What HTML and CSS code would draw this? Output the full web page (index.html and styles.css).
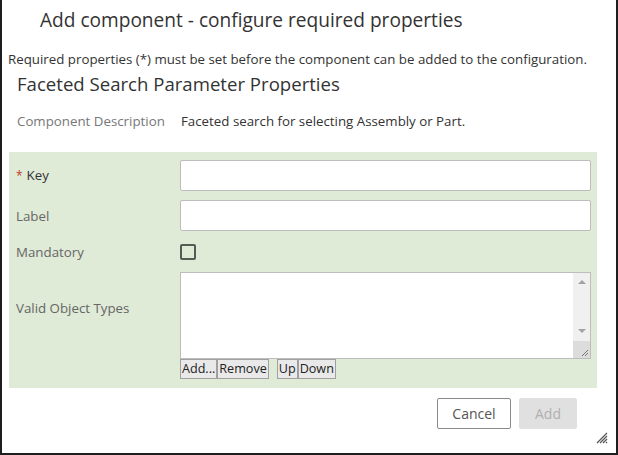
FILE: index.html
```html
<!DOCTYPE html>
<html>
<head>
<meta charset="utf-8">
<link rel="stylesheet" href="styles.css">
</head>
<body>
<div class="dialog">
  <div class="title">Add component - configure required properties</div>
  <p class="intro">Required properties (*) must be set before the component can be added to the configuration.</p>
  <div class="section-title">Faceted Search Parameter Properties</div>
  <div class="desc">
    <span class="desc-label">Component Description</span>
    <span class="desc-value">Faceted search for selecting Assembly or Part.</span>
  </div>
  <div class="panel">
    <div class="row row-key">
      <label class="lbl lbl-req"><span class="req">*</span>Key</label>
      <input class="field" type="text">
    </div>
    <div class="row row-label">
      <label class="lbl">Label</label>
      <input class="field" type="text">
    </div>
    <div class="row row-mand">
      <label class="lbl">Mandatory</label>
      <span class="check"></span>
    </div>
    <div class="row row-types">
      <label class="lbl lbl-types">Valid Object Types</label>
      <div class="types">
        <div class="listbox">
          <div class="list-area"></div>
          <div class="scrollbar">
            <div class="sb-track">
              <span class="arrow up"></span>
              <span class="arrow down"></span>
            </div>
            <div class="sb-corner">
              <svg width="17" height="17" viewBox="0 0 17 17"><path d="M15 9 L9 15 M15 12 L12 15" stroke="#777" stroke-width="1" fill="none"/></svg>
            </div>
          </div>
        </div>
        <div class="list-buttons">
          <button class="mini">Add...</button><button class="mini">Remove</button>
          <span class="spacer"></span>
          <button class="mini">Up</button><button class="mini">Down</button>
        </div>
      </div>
    </div>
  </div>
  <div class="footer">
    <button class="btn btn-cancel">Cancel</button>
    <button class="btn btn-add" disabled>Add</button>
  </div>
  <svg class="grip" width="14" height="14" viewBox="0 0 14 14">
    <path d="M12 2 L2 12 M12 5 L5 12 M12 8 L8 12 M12 11 L11 12" stroke="#555" stroke-width="1.2" fill="none"/>
  </svg>
</div>
</body>
</html>
```

FILE: styles.css
```css
html, body {
  margin: 0;
  padding: 0;
  background: #ffffff;
  overflow: hidden;
}

body {
  font-family: "Open Sans", "Noto Sans", "Liberation Sans", sans-serif;
  color: #333333;
}

.dialog {
  position: relative;
  box-sizing: border-box;
  width: 618px;
  height: 457px;
  margin-top: -2px;
  border: 2px solid #1e1e1e;
  background: #ffffff;
}

.title {
  height: 40px;
  line-height: 40px;
  padding-left: 38px;
  font-size: 19.1px;
  color: #333333;
  white-space: nowrap;
}

.intro {
  margin: 10px 0 0 0;
  padding-left: 6px;
  font-size: 13.3px;
  line-height: 18px;
  color: #333333;
  white-space: nowrap;
}

.section-title {
  margin-top: 4px;
  padding-left: 15px;
  font-size: 18.6px;
  line-height: 24px;
  color: #333333;
  white-space: nowrap;
}

.desc {
  display: flex;
  margin-top: 16px;
  padding-left: 15px;
  font-size: 13.3px;
  line-height: 18px;
}

.desc-label {
  width: 164px;
  color: #777777;
}

.desc-value {
  color: #333333;
}

.panel {
  margin: 22px 0 0 7px;
  width: 588px;
  box-sizing: border-box;
  padding: 8px 6px 9px 7px;
  background: #dfead7;
}

.row {
  display: flex;
  align-items: center;
}

.lbl {
  width: 164px;
  flex: none;
  font-size: 13.3px;
  line-height: 18px;
  color: #666666;
}

.lbl-req {
  color: #333333;
}

.req {
  color: #c0392b;
  margin-right: 4px;
  font-size: 12px;
}

.field {
  box-sizing: border-box;
  width: 411px;
  height: 31px;
  margin: 0;
  border: 1px solid #bdbdbd;
  border-radius: 2px;
  background: #ffffff;
  padding: 0 6px;
  font-family: inherit;
  font-size: 13px;
}

.row-label {
  margin-top: 9px;
}

.row-mand {
  margin-top: 12px;
}

.check {
  box-sizing: border-box;
  width: 16px;
  height: 16px;
  border: 2px solid #555a55;
  border-radius: 2px;
  background: transparent;
}

.row-types {
  margin-top: 11px;
  align-items: flex-start;
}

.lbl-types {
  padding-top: 27px;
}

.types {
  width: 411px;
  display: flex;
  flex-direction: column;
}

.listbox {
  box-sizing: border-box;
  height: 87px;
  display: flex;
  border: 1px solid #bdbdbd;
  background: #ffffff;
}

.list-area {
  flex: 1;
}

.scrollbar {
  width: 17px;
  display: flex;
  flex-direction: column;
  background: #f0f0f0;
}

.sb-track {
  flex: 1;
  display: flex;
  flex-direction: column;
  justify-content: space-between;
  align-items: center;
  padding: 7px 0 8px 0;
}

.arrow {
  width: 0;
  height: 0;
  border-left: 4px solid transparent;
  border-right: 4px solid transparent;
}

.arrow.up {
  border-bottom: 4px solid #a3a3a3;
}

.arrow.down {
  border-top: 4px solid #a3a3a3;
}

.sb-corner {
  height: 17px;
  background: #dcdcdc;
}

.sb-corner svg {
  display: block;
}

.list-buttons {
  display: flex;
  align-items: center;
  height: 20px;
}

.mini {
  box-sizing: border-box;
  height: 20px;
  margin: 0;
  padding: 0 1px;
  border: 1px solid #a0a0a0;
  border-radius: 0;
  background: #e9e9e9;
  color: #222222;
  font-family: inherit;
  font-size: 12.6px;
  line-height: 18px;
}

.spacer {
  width: 8px;
}

.footer {
  display: flex;
  justify-content: flex-end;
  gap: 8px;
  margin-top: 10px;
  padding-right: 39px;
}

.btn {
  box-sizing: border-box;
  height: 31px;
  margin: 0;
  border-radius: 2px;
  font-family: inherit;
  font-size: 14px;
}

.btn-cancel {
  width: 74px;
  border: 1px solid #8a8a8a;
  background: #ffffff;
  color: #555555;
}

.btn-add {
  width: 58px;
  border: 1px solid #e0e0e0;
  background: #e0e0e0;
  color: #b0b0b0;
}

.grip {
  position: absolute;
  right: 7px;
  bottom: 8px;
}
```
